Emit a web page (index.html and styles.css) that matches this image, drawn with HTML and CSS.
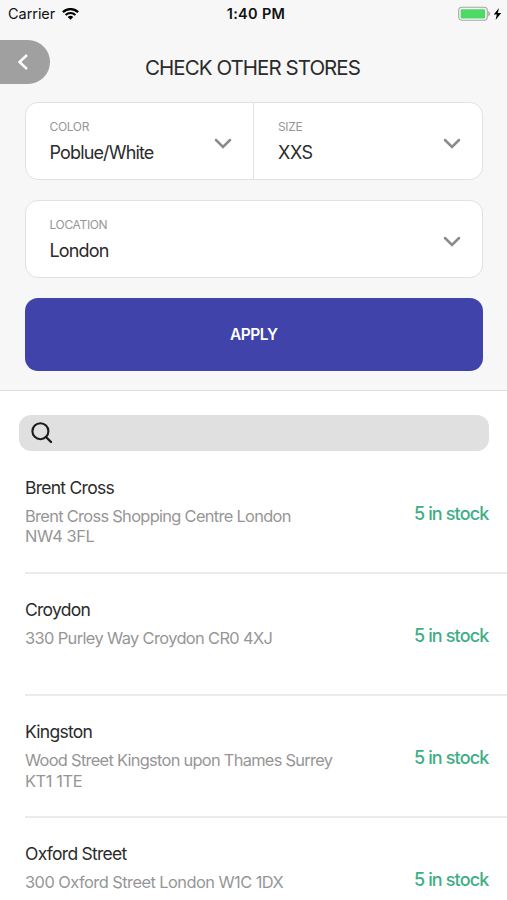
FILE: index.html
```html
<!DOCTYPE html>
<html lang="en">
<head>
<meta charset="utf-8">
<title>Check other stores</title>
<link rel="stylesheet" href="styles.css">
</head>
<body>
<section class="filters">
  <div class="status">
    <div class="carrier"><span>Carrier</span>
      <svg width="17" height="12" viewBox="0 0 17 12"><path d="M.9 4.1a11 11 0 0 1 15.2 0" fill="none" stroke="#000" stroke-width="2.3"/><path d="M3.6 7a7.1 7.1 0 0 1 9.8 0" fill="none" stroke="#000" stroke-width="2.1"/><path d="M8.5 11.8 5.7 9a4 4 0 0 1 5.6 0z"/></svg>
    </div>
    <span class="time">1:40 PM</span>
    <div class="battery">
      <svg width="44" height="16" viewBox="0 0 44 16"><rect x=".7" y="1.2" width="28.6" height="13" rx="3.2" fill="#f7f7f7" stroke="#a6a6a6" stroke-width="1.1"/><rect x="2.7" y="3.2" width="24.4" height="9.2" rx="1" fill="#4cd964"/><path d="M30.6 5.3q2.4 2.4 0 4.8z" fill="#a6a6a6" stroke="#a6a6a6" stroke-width=".6"/><path d="M41 2 35.8 8.5h3L37.6 14l5.6-7.1h-3.4z"/></svg>
    </div>
  </div>
  <header class="header">
    <button class="back" aria-label="Back"><svg width="12" height="18" viewBox="0 0 12 18"><path d="M10 2 2.5 9l7.5 7" fill="none" stroke="#fff" stroke-width="2.4"/></svg></button>
    <h1 class="title">CHECK OTHER STORES</h1>
  </header>
  <div class="form">
    <div class="group">
      <div class="select color"><div><div class="label">COLOR</div><div class="value">Poblue/White</div></div><svg class="chevron" width="18" height="11" viewBox="0 0 18 11"><path d="m2 2 7 7 7-7"/></svg></div>
      <div class="select size"><div><div class="label">SIZE</div><div class="value">XXS</div></div><svg class="chevron" width="18" height="11" viewBox="0 0 18 11"><path d="m2 2 7 7 7-7"/></svg></div>
    </div>
    <div class="group">
      <div class="select location"><div><div class="label">LOCATION</div><div class="value">London</div></div><svg class="chevron" width="18" height="11" viewBox="0 0 18 11"><path d="m2 2 7 7 7-7"/></svg></div>
    </div>
    <button class="apply">APPLY</button>
  </div>
</section>
<main>
  <div class="search"><svg width="22" height="22" viewBox="0 0 22 22"><circle cx="9.4" cy="9.2" r="8" fill="none" stroke="#1c1c1c" stroke-width="2.1"/><path d="m15 15 5 5" stroke="#1c1c1c" stroke-width="2.4" stroke-linecap="round"/></svg></div>
  <div class="stores">
    <article class="store"><div><h2 class="name">Brent Cross</h2><p class="address a1">Brent Cross Shopping Centre London<br><span class="postcode">NW4 3FL</span></p></div><span class="stock">5 in stock</span></article>
    <article class="store"><div><h2 class="name">Croydon</h2><p class="address a2">330 Purley Way Croydon CR0 4XJ</p></div><span class="stock">5 in stock</span></article>
    <article class="store"><div><h2 class="name">Kingston</h2><p class="address a3">Wood Street Kingston upon Thames Surrey<br><span class="postcode">KT1 1TE</span></p></div><span class="stock">5 in stock</span></article>
    <article class="store"><div><h2 class="name">Oxford Street</h2><p class="address a4">300 Oxford Street London W1C 1DX</p></div><span class="stock">5 in stock</span></article>
  </div>
</main>
</body>
</html>
```

FILE: styles.css
```css
* { box-sizing: border-box; }
body { margin: 0; height: 900px; overflow: hidden; background: #fff; color: #2b2b2b; font-family: Inter, "Liberation Sans", sans-serif; }
h1, h2, p { margin: 0; font-weight: 400; }
button { border: 0; padding: 0; font-family: inherit; }
svg { display: block; flex: none; }
.filters { height: 391px; background: #f7f7f7; border-bottom: 1px solid #dedede; }
.status { height: 27px; display: grid; grid-template-columns: 1fr auto 1fr; align-items: center; padding: 0 5px 0 8px; color: #111; }
.carrier { display: flex; align-items: center; gap: 6.5px; font-size: 14.5px; letter-spacing: -.05px; }
.time { font-size: 14.5px; font-weight: 600; letter-spacing: .3px; padding-left: 2px; }
.battery { justify-self: end; }
.header { height: 75px; display: grid; grid-template-columns: 50px 1fr 50px; padding-top: 13px; }
.back { height: 44px; background: #a0a0a0; border-radius: 0 22px 22px 0; padding-left: 17px; }
.title { text-align: center; font-size: 20.5px; line-height: 55px; letter-spacing: -.95px; white-space: nowrap; padding-right: 2px; }
.form { padding: 0 24.5px 0 25px; display: grid; gap: 20px; }
.group { height: 78px; display: flex; background: #fff; border: 1px solid #e1e1e1; border-radius: 13px; }
.select { flex: 1; display: flex; justify-content: space-between; align-items: center; padding: 0 21px 0 24px; }
.color { padding-left: 23.5px; }
.size { border-left: 1px solid #e1e1e1; }
.location { padding-left: 23.5px; }
.label { font-size: 12px; line-height: 16px; color: #969696; letter-spacing: -.35px; margin-top: 2px; }
.value { font-size: 18px; line-height: 24px; margin-top: 6px; letter-spacing: -.85px; }
.size .value { letter-spacing: -.4px; }
.chevron { fill: none; stroke: #8b8b8b; stroke-width: 2.5; stroke-linecap: round; margin-top: 4px; }
.apply { height: 73px; border-radius: 13px; background: #4044aa; color: #fff; font-size: 15.5px; font-weight: 600; letter-spacing: -.5px; }
.search { height: 36px; margin: 24.4px 18.5px 0 19px; background: #e0e0e0; border-radius: 12px; display: flex; align-items: center; padding-left: 12px; }
.stores { margin-left: 25px; }
.store { height: 122.2px; display: flex; justify-content: space-between; align-items: flex-start; border-bottom: 2px solid #ebebeb; padding: 24.2px 18.5px 0 0; }
.name { font-size: 17.5px; line-height: 24px; letter-spacing: -.73px; }
.address { font-size: 16.4px; line-height: 20.4px; color: #969696; margin-top: 6.2px; letter-spacing: -.5px; white-space: nowrap; }
.a1 { letter-spacing: -.68px; }
.a2 { letter-spacing: -.62px; }
.a3 { letter-spacing: -.71px; }
.a4 { letter-spacing: -.54px; }
.postcode { letter-spacing: -.4px; }
.stock { font-size: 18px; line-height: 24px; margin-top: 26px; letter-spacing: -.85px; font-weight: 500; color: #40ae85; }
```
